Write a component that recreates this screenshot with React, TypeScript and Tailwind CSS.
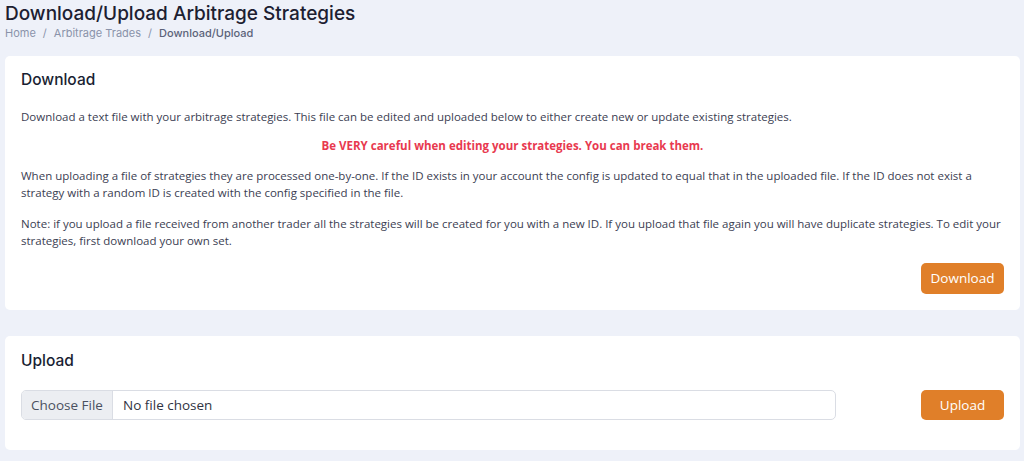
import React from "react";

export default function App() {
  const body = "text-[11.5px] leading-[17px] text-[#3b4052]";
  return (
    <div className="min-h-[461px] w-[1024px] bg-[#eef1f9] px-[5px]" style={{ fontFamily: '"Open Sans", sans-serif' }}>
      <div className="pt-[1px]">
        <h1 className="text-[19px] leading-[26px] font-medium text-[#1c2031]" style={{ fontFamily: 'Inter, "Noto Sans", sans-serif' }}>
          Download/Upload Arbitrage Strategies
        </h1>
        <div className="mt-[-1px] flex gap-[7px] text-[11px] leading-[14px] text-[#8a93aa]" style={{ fontFamily: 'Inter, "Noto Sans", sans-serif' }}>
          <span>Home</span>
          <span>/</span>
          <span>Arbitrage Trades</span>
          <span>/</span>
          <span className="font-medium text-[#5b6379]">Download/Upload</span>
        </div>
      </div>

      <div className="mt-[16px] w-[1015px] rounded-[5px] bg-white px-[16px] pt-[13px] pb-[16px]">
        <h2 className="text-[15.5px] leading-[22px] font-medium text-[#1a1f33]" style={{ fontFamily: 'Inter, "Noto Sans", sans-serif' }}>
          Download
        </h2>
        <p className={`${body} mt-[17px]`}>
          Download a text file with your arbitrage strategies. This file can be edited and uploaded below to either create new or update existing strategies.
        </p>
        <p className="mt-[12px] text-center text-[11.5px] leading-[17px] font-bold text-[#e8394f]">
          Be VERY careful when editing your strategies. You can break them.
        </p>
        <p className={`${body} mt-[13px]`}>
          When uploading a file of strategies they are processed one-by-one. If the ID exists in your account the config is updated to equal that in the uploaded file. If the ID does not exist a strategy with a random ID is created with the config specified in the file.
        </p>
        <p className={`${body} mt-[14px]`}>
          Note: if you upload a file received from another trader all the strategies will be created for you with a new ID. If you upload that file again you will have duplicate strategies. To edit your strategies, first download your own set.
        </p>
        <div className="mt-[14px] flex justify-end">
          <button className="h-[31px] w-[83px] rounded-[5px] bg-[#e07f29] text-[13.5px] text-white">Download</button>
        </div>
      </div>

      <div className="mt-[26px] w-[1015px] rounded-[5px] bg-white px-[16px] pt-[14px] pb-[30px]">
        <h2 className="text-[15.5px] leading-[22px] font-medium text-[#1a1f33]" style={{ fontFamily: 'Inter, "Noto Sans", sans-serif' }}>
          Upload
        </h2>
        <div className="mt-[18px] flex items-center justify-between">
          <div className="flex h-[30px] w-[815px] overflow-hidden rounded-[5px] border border-[#dadde4] text-[13.5px]">
            <div className="flex w-[91px] items-center justify-center border-r border-[#dadde4] bg-[#eceef2] text-[#4a5060]">Choose File</div>
            <div className="flex items-center pl-[10px] text-[#2f3342]">No file chosen</div>
          </div>
          <button className="h-[30px] w-[83px] rounded-[5px] bg-[#e07f29] text-[13.5px] text-white">Upload</button>
        </div>
      </div>
    </div>
  );
}
